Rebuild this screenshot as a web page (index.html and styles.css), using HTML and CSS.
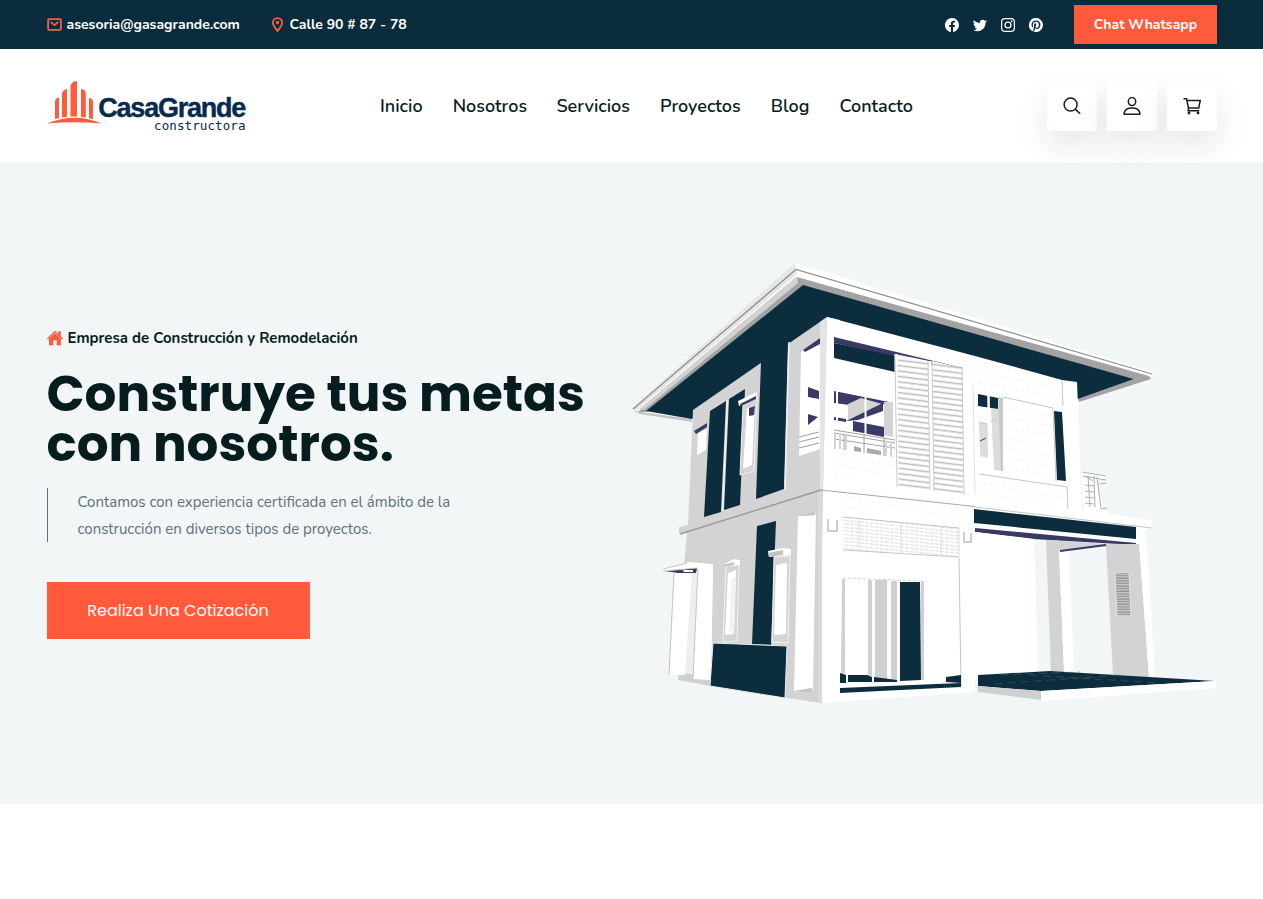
FILE: index.html
```html
<!DOCTYPE html>
<html lang="es">
<head>
<meta charset="utf-8">
<title>CasaGrande constructora</title>
<link rel="stylesheet" href="styles.css">
</head>
<body>
<div class="topbar">
  <div class="contact">
    <a class="contact-item mail"><svg width="15" height="15" viewBox="0 0 15 15" fill="none" stroke="#ff5a3c" stroke-width="1.8"><rect x="1.1" y="2.2" width="12.800" height="10.600" rx="1"/><path d="M3.600 4.800 7.500 8.200l3.900-3.400" stroke-width="1.700"/></svg><span>asesoria@gasagrande.com</span></a>
    <a class="contact-item place"><svg width="15" height="15" viewBox="0 0 15 15" fill="none" stroke="#ff5a3c" stroke-width="1.800"><path d="M7.500 14C5.300 11.300 2.900 8.500 2.900 5.700a4.600 4.600 0 0 1 9.200 0C12.100 8.500 9.700 11.300 7.500 14Z"/><circle cx="7.500" cy="5.500" r="1.700" fill="#ff5a3c" stroke="none"/></svg><span>Calle 90 # 87 - 78</span></a>
  </div>
  <div class="top-right">
    <div class="social">
      <svg viewBox="0 0 16 16"><path d="M16 8.049c0-4.446-3.582-8.050-8-8.050C3.580 0-.002 3.603-.002 8.050c0 4.017 2.926 7.347 6.750 7.951v-5.625h-2.030V8.050H6.750V6.275c0-2.017 1.195-3.131 3.022-3.131.876 0 1.791.157 1.791.157v1.980h-1.009c-.993 0-1.303.621-1.303 1.258v1.510h2.218l-.354 2.326H9.250V16c3.824-.604 6.750-3.934 6.750-7.951z"/></svg>
      <svg viewBox="0 0 16 16"><path d="M5.026 15c6.038 0 9.341-5.003 9.341-9.334 0-.14 0-.282-.006-.422A6.685 6.685 0 0 0 16 3.542a6.658 6.658 0 0 1-1.889.518 3.301 3.301 0 0 0 1.447-1.817 6.533 6.533 0 0 1-2.087.793A3.286 3.286 0 0 0 7.875 6.030a9.325 9.325 0 0 1-6.767-3.429 3.289 3.289 0 0 0 1.018 4.382A3.323 3.323 0 0 1 .64 6.575v.045a3.288 3.288 0 0 0 2.632 3.218 3.203 3.203 0 0 1-.865.115 3.230 3.230 0 0 1-.614-.057 3.283 3.283 0 0 0 3.067 2.277A6.588 6.588 0 0 1 .78 13.580a6.320 6.320 0 0 1-.78-.045A9.344 9.344 0 0 0 5.026 15z"/></svg>
      <svg viewBox="0 0 16 16"><rect x=".7" y=".7" width="14.600" height="14.600" rx="3.900" fill="none" stroke="#fff" stroke-width="1.400"/><circle cx="8" cy="8" r="3.400" fill="none" stroke="#fff" stroke-width="1.400"/><circle cx="12.200" cy="3.800" r="1"/></svg>
      <svg viewBox="0 0 16 16"><path d="M8 0a8 8 0 0 0-2.915 15.452c-.07-.633-.134-1.606.027-2.297.146-.625.938-3.977.938-3.977s-.239-.479-.239-1.187c0-1.113.645-1.943 1.448-1.943.682 0 1.012.512 1.012 1.127 0 .686-.437 1.712-.663 2.663-.188.796.4 1.446 1.185 1.446 1.422 0 2.515-1.500 2.515-3.664 0-1.915-1.377-3.254-3.342-3.254-2.276 0-3.612 1.707-3.612 3.471 0 .688.265 1.425.595 1.826a.24.24 0 0 1 .056.23c-.061.252-.196.796-.222.907-.035.146-.116.177-.268.107-1-.465-1.624-1.926-1.624-3.100 0-2.523 1.834-4.840 5.286-4.840 2.775 0 4.932 1.977 4.932 4.620 0 2.757-1.739 4.976-4.151 4.976-.811 0-1.573-.421-1.834-.919l-.498 1.902c-.181.695-.669 1.566-.995 2.097A8 8 0 1 0 8 0z"/></svg>
    </div>
    <a class="chat"><span>Chat Whatsapp</span></a>
  </div>
</div>
<header class="header">
  <svg class="logo" width="200" height="51" viewBox="47 81 200 51">
    <g fill="#ff5a3c">
      <path d="M55 119V102q0-4 4-4.500v20.800zM62 117.500V94q0-4 5-5v28zM70.500 116.500V87q0-5.500 6.500-6v35.500zM81 117V89q4.800.5 4.800 4.500v24zM89 118.300V98q4 .5 4 4v17z"/>
      <path d="M47 123.500q28-11.500 54.500 0-27-2.600-54.500 0z"/>
    </g>
    <text class="logo-name" x="98.300" y="117" textLength="148" lengthAdjust="spacing">CasaGrande</text>
    <text class="logo-sub" x="154" y="130" textLength="91.500" lengthAdjust="spacing">constructora</text>
  </svg>
  <nav class="nav"><a>Inicio</a><a>Nosotros</a><a>Servicios</a><a>Proyectos</a><a>Blog</a><a>Contacto</a></nav>
  <div class="actions">
    <a class="action"><svg width="18" height="18" viewBox="0 0 18 18"><circle cx="7.600" cy="7.600" r="6.500"/><path d="m12.400 12.400 4.800 4.400"/></svg></a>
    <a class="action"><svg width="18" height="18" viewBox="0 0 18 18"><ellipse cx="9" cy="4.600" rx="3.700" ry="4"/><path d="M1.200 17.200v-1.500C2 12.400 5 10.900 9 10.900s7 1.500 7.800 4.800v1.500z"/></svg></a>
    <a class="action"><svg width="18" height="18" viewBox="0 0 18 18"><path d="M.5 1.700h3l2 9.300h10.200L17.200 3.600H4M5.500 11l-.3 2.800h11"/><circle cx="6" cy="16" r="1.400" class="wheel"/><circle cx="15" cy="16" r="1.400" class="wheel"/></svg></a>
  </div>
</header>
<main class="hero">
  <section class="intro">
    <div class="eyebrow"><svg width="16" height="16" viewBox="0 0 16 16" fill="#ff5a3c"><path d="M8 .7 0 8.500l1 .9L8 2.700l7 6.700 1-.9-2.200-2.200V1.200h-2.500v2.700z"/><path d="M8 3.300 2 9V15.200h4.300v-5h3.400v5h4.300V9z"/></svg><span>Empresa de Construcción y Remodelación</span></div>
    <h1 class="title">Construye tus metas<br>con nosotros.</h1>
    <p class="lead">Contamos con experiencia certificada en el ámbito de la<br>construcción en diversos tipos de proyectos.</p>
    <a class="cta"><span>Realiza Una Cotización</span></a>
  </section>
  <svg class="house" width="585" height="442" viewBox="632 263 585 442">
    <defs>
      <pattern id="slats" width="40" height="5.400" patternUnits="userSpaceOnUse" patternTransform="skewY(7)"><rect width="40" height="5.400" fill="#fff"/><path d="M0 1.500h40" stroke="#bdbdbd" stroke-width="1.500"/></pattern>
      <pattern id="blind" width="5" height="3.500" patternUnits="userSpaceOnUse" patternTransform="skewY(6)"><path d="M0 1h4" stroke="#cfcfcf" stroke-width=".8"/></pattern>
      <pattern id="siding" width="6" height="10" patternUnits="userSpaceOnUse" patternTransform="skewY(11)"><path d="M0 2h4" stroke="#f0f0f0" stroke-width="1"/></pattern>
      <pattern id="vent" width="20" height="2.600" patternUnits="userSpaceOnUse"><rect width="20" height="2.600" fill="#ccc"/><path d="M0 1h20" stroke="#8b8b8b" stroke-width="1.200"/></pattern>
    </defs>
    <!-- roof -->
    <path fill="#fff" d="M796 263 1153 372 1151 379 1079 402 827 330 692 421 634 411 632 408Z"/>
    <path fill="#e6e6e6" d="M795 263 632 408 636 412 797 274Z"/>
    <path fill="#a3a3a3" d="M797 277 1149 376 1151 379 1079 402 1078 399 1134 379 803 287 648 412 638 412 797 283Z"/>
    <path fill="#d2d2d2" d="M797 276 638 410 645 409 798 283Z"/>
    <path fill="none" stroke="#8e8e8e" stroke-width="1.200" d="M633 409 796 269.500 1152 374"/>
    <path fill="none" stroke="#fff" d="M636 411 797 275"/>
    <path fill="#c4c4c4" d="M634 411 692 419V422L640 414Z"/>
    <path fill="#0b2d3e" d="M803 285 1134 379 1078 399 1060 390 827 330 700 412 692 419 646 411Z"/>
    <!-- side wall -->
    <path fill="#d3d3d3" d="M827 317 693 410 688 525 679 527V534L687 533 684 566 713 564 711 680 710 686 820 703 840 690V320Z"/>
    <path fill="#0b2d3e" d="M710 411 726 401 721 512 704 517ZM729 399 745 389 740 505 724 510ZM761 362 788 342 784 489 756 499ZM757 526 776 521 771 645 752 644Z"/>
    <path fill="none" stroke="#f2f2f2" stroke-width="1.500" d="M789 342 785 490M727.500 400 722.500 511"/>
    <path fill="#fff" d="M698 433 707 429 706 450 697 455ZM738 401 757 392V397L739 406Z"/>
    <path fill="#393b66" d="M694 431 707 423V427L696 434Z"/>
    <path fill="#d3d3d3" stroke="#f1f1f1" d="M743 405 757 397 754 471 740 475Z"/>
    <path fill="#fff" d="M747 408 755 406 752 465 743 469Z"/>
    <path fill="#393b66" d="M740 404 756 396V399L741 406ZM749 408 755 406 754 415 749 416Z"/>
    <path fill="#fff" d="M801 352 820 338V449L799 456Z"/>
    <path fill="#393b66" d="M803 350 820 338V344L805 352ZM808 387 819 391V399L808 397ZM808 414 818 417 808 425Z"/>
    <path stroke="#9b9b9b" fill="none" d="M799 437 819 432M799 442 819 437M799 448 819 443"/>
    <!-- front walls -->
    <path fill="#fff" d="M827 317 975 356 1062 380 1077 382 1082 510 1108 511 1110 514 1152 520V528L1146 529 1139 545 975 530V692L820 703 823 490Z"/>
    <path fill="#e4e4e4" d="M827 317 820 322V490L823 489Z"/>
    <path fill="#dadada" d="M818 491 822 490V703L818 703Z"/>
    <path fill="url(#siding)" d="M975 358 1061 380V408L975 388ZM1004 400 1052 410 1055 480 1004 472ZM978 476 1066 489V508L978 495ZM834 455 895 463V482L834 475ZM843 494 960 507V518L843 508Z"/>
    <!-- balcony -->
    <path fill="#393b66" d="M834 337 963 368V371L895 357 834 343ZM834 391 889 402 886 412 858 406 834 403Z"/>
    <path fill="#0b2d3e" d="M834 343 895 356V372L834 358Z"/>
    <path fill="#d3d3d3" d="M848 404 861 398 882 404 848 420Z"/>
    <path fill="#fff" d="M867 411 884 404V425L867 422Z"/>
    <path fill="#393b66" d="M846 421 883 403V411L858 420ZM834 417 846 419V422L834 420ZM853 421 884 427V437L853 431Z"/>
    <path fill="#d3d3d3" d="M884 402 893 402V437L884 435Z"/>
    <path fill="none" stroke="#fff" stroke-width="2" d="M837 390V430M865.500 396V438"/>
    <path fill="none" stroke="#a2a2a2" d="M834 430 895 440M834 433 895 443M834 439 895 448M844 434V450M864 434V453M884 438V456"/>
    <path fill="none" stroke="#d4d4d4" stroke-width="2" d="M835 433V449M840 433V449M846 434V450M886 441V456M891 441V457"/>
    <path fill="#aaa" d="M854 446 861 448V452L854 451ZM867 448 881 451V455L867 453Z"/>
    <path fill="url(#slats)" d="M896 354 929 361V490L898 487ZM932 361 963 368V495L934 491Z"/>
    <path fill="none" stroke="#fff" stroke-width="3" d="M896 354 897 488M930 361 931 490"/>
    <path fill="none" stroke="#cacaca" d="M895 354 897 487M928 361 930 490M932 362 934 491M962 368 964 495"/>
    <!-- upper right windows -->
    <path fill="#0b2d3e" d="M978 394 998 398V409L978 406ZM1054 411 1062 412 1066 481 1057 480Z"/>
    <path fill="#dcdcdc" d="M979 422 988 424V458L980 456ZM991 409 1001 409V471L994 470Z"/>
    <path fill="#c9c9c9" d="M998 397 1003 398V471H1001Z"/>
    <path fill="none" stroke="#fff" stroke-width="2.500" d="M988.500 395 989.500 470"/>
    <path fill="none" stroke="#c6c6c6" d="M1003 397 1053 408 1056 481M979 474 1067 487 1068 509M1062 380 1063 406M979 422 987 424M991 421 997 420"/>
    <path fill="none" stroke="#e2e2e2" d="M973 385 975 494"/>
    <path stroke="#393b66" d="M980 441 986 438"/>
    <path fill="#fff" d="M1081 471 1106 475V479L1095 480 1104 510H1084Z"/>
    <path fill="none" stroke="#b0b0b0" d="M1082 472 1106 476M1083 476 1106 480M1097 477 1101 509M1085 476 1093 481M1085 485 1094 486M1085 491 1094 492M1085 497 1094 498M1085 503 1094 504M1100 484 1106 483M1101 509 1107 508M1088 476 1090 507M1094 476 1095 507"/>
    <!-- ledges -->
    <path fill="none" stroke="#9b9b9b" stroke-width="1.400" d="M680 534 821 490"/>
    <path fill="none" stroke="#a8a8a8" d="M821 490 975 506.500"/>
    <path fill="none" stroke="#c6c6c6" d="M975 507 1136 526 1152 528"/>
    <path fill="#0b2d3e" d="M974 509 1136 527V539L974 523Z"/>
    <path fill="#393b66" d="M975 528 1136 543V545L1033 539 975 532Z"/>
    <!-- lower facade -->
    <path fill="url(#blind)" d="M843 517 959 528V557L843 550Z"/>
    <path fill="none" stroke="#c4c4c4" d="M843 517 959 528M959 557 843 550M959 558 961 686"/>
    <path fill="none" stroke="#dedede" d="M859 519V550M901 523V553M941 527V556M959 528V557"/>
    <path fill="none" stroke="#bfbfbf" stroke-width="1.500" d="M828 519V531H837V520M964 532V542H971V533"/>
    <path fill="#d0d0d0" d="M842 579 845 579V674H841ZM868 580H872V676H868ZM875 580H887V679H875ZM891 581H897V681H891ZM921 581H924V680H921Z"/>
    <path fill="#0b2d3e" d="M900 582H920L921 680 900 681ZM840 673 846 675V683H840ZM848 675H867L872 677V682H848ZM874 677 897 680V682H874ZM946 677 961 675V683L946 682ZM840 688 961 683V687L840 693Z"/>
    <path fill="none" stroke="#d5d5d5" stroke-dasharray="3 2" d="M843 578 922 581"/>
    <!-- carport -->
    <path fill="#fff" d="M975 532 1034 539 1038 672 975 680Z"/>
    <path fill="#d3d3d3" d="M1046 540 1106 544 1139 544 1149 677 1113 675 1106 546 1059 551 1064 672 1051 671Z"/>
    <path fill="#fff" d="M1059 550 1069 549 1074 674 1064 672ZM1138 528 1146 528 1155 677 1149 677Z"/>
    <path fill="none" stroke="#393b66" stroke-width="2" d="M1060 551 1106 545"/>
    <path fill="url(#vent)" stroke="#e1e1e1" d="M1115 573 1129 572 1131 616 1117 616Z"/>
    <path fill="#0b2d3e" d="M978 675 1050 671 1215 681 1041 691 978 686Z"/>
    <path fill="#fff" d="M1041 691 1216 681V688L1041 701Z"/>
    <path fill="#d0d0d0" d="M978 686 1041 691V700L978 692Z"/>
    <path fill="none" stroke="#4e6976" stroke-width=".5" stroke-dasharray="8 5" d="M995 684 1120 675M1030 675 1160 683M1000 675 1080 672"/>
    <!-- lower left -->
    <path fill="#eee" d="M684 566 700 565 694 679 678 674Z"/>
    <path fill="#d0d0d0" d="M679 672 711 678 710 686 678 680Z"/>
    <path fill="#fff" d="M674 572 692 572 685 675 669 675ZM698 567 713 564 711 680 693 679ZM663 568 688 562 713 564 697 569 665 571Z"/>
    <path fill="#393b66" d="M665 571 697 568 696 573 678 573Z"/>
    <path fill="#fff" d="M683 570 693 570V572L684 572Z"/>
    <path fill="none" stroke="#c4c4c4" d="M674 573 669 675M698 569 693 678M663 569 687 563M664 571 697 568"/>
    <path fill="#d4d4d4" stroke="#f3f3f3" d="M726 566 739 563 737 641 723 642ZM774 557 790 556 788 643 772 642Z"/>
    <path fill="#fff" d="M722 565 734 559 740 560V565L724 567ZM768 551 783 548 791 549V555L769 557ZM728 573 736 570 734 634 725 635ZM776 565 787 563 786 634 774 635ZM798 516 816 511 813 690 794 691Z"/>
    <path fill="#eff4f5" d="M731 579 736 577 734 633 729 632Z"/>
    <path fill="#c4c4c4" d="M768 553 783 550V555L769 557ZM722 565 734 562V565L724 567ZM798 516 816 511 815 515 806 516ZM794 691 812 688V692Z"/>
    <path fill="#0b2d3e" stroke="#eee" d="M713 643 787 646 785 698 710 686Z"/>
  </svg>
</main>
</body>
</html>
```
FILE: styles.css
```css
body { margin: 0; background: #fff; color: #071c1f; font-family: "Nunito", "Open Sans", sans-serif; }
.topbar { height: 49px; padding: 0 46px 0 46.5px; box-sizing: border-box; background: #0b2c3d; color: #fff; display: flex; justify-content: space-between; align-items: center; font-size: 14px; font-weight: 700; }
.contact, .top-right, .social, .contact-item { display: flex; align-items: center; }
.contact { gap: 30px; }
.contact-item { gap: 5px; white-space: nowrap; }
.mail span { width: 173px; }
.top-right { gap: 31px; }
.social { gap: 14px; }
.social svg { width: 14px; height: 14px; fill: #fff; }
.chat { width: 143px; height: 39px; background: #ff5a3c; display: flex; align-items: center; justify-content: center; }
.header { position: relative; z-index: 1; height: 114px; padding: 0 46px 0 46.5px; box-sizing: border-box; display: flex; align-items: center; justify-content: space-between; }
.logo { overflow: visible; }
.logo-name { font: 700 27px "Liberation Sans", Arial, sans-serif; fill: #062b4f; stroke: #062b4f; stroke-width: .4; }
.logo-sub { font: 12.5px "DejaVu Sans Mono", monospace; fill: #062b4f; }
.nav { display: grid; grid-template-columns: 43px 74px 74px 81px 39px 74px; column-gap: 29.700px; font-size: 18px; font-weight: 600; white-space: nowrap; }
.actions { display: flex; gap: 10px; }
.action { width: 50px; height: 50px; background: #fff; display: flex; align-items: center; justify-content: center; box-shadow: 0 16px 32px rgba(7, 28, 31, .1); }
.action svg { fill: none; stroke: #1c1c1c; stroke-width: 1.500; }
.action .wheel { fill: #1c1c1c; stroke: none; }
.hero { height: 641px; padding: 0 46px 0 46.5px; box-sizing: border-box; background: #f2f6f7; display: flex; align-items: center; justify-content: space-between; }
.intro { width: 560px; white-space: nowrap; }
.eyebrow { display: flex; align-items: center; gap: 5px; height: 20px; font-size: 15px; font-weight: 700; }
.title { margin: 21px 0 19px; font: 700 50px/50px "Poppins", "Inter", sans-serif; }
.lead { margin: 0; padding: 1px 0 0 30px; height: 53px; border-left: 1px solid #5c727d; color: #5c727d; font-size: 15px; line-height: 27px; }
.cta { margin-top: 40px; width: 263px; height: 57px; background: #ff5a3c; color: #fff; display: flex; align-items: center; justify-content: center; font: 400 16px "Poppins", "Inter", sans-serif; }
.house { display: block; }
```
